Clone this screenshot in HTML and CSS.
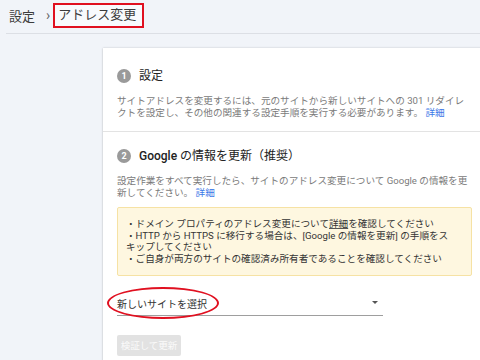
FILE: index.html
```html
<!DOCTYPE html>
<html lang="ja">
<head>
<meta charset="utf-8">
<link rel="stylesheet" href="styles.css">
</head>
<body>
<header class="header">
  <span class="crumb">設定</span>
  <span class="chev">›</span>
  <span class="crumb current">アドレス変更</span>
</header>
<main class="card">
  <section class="section first">
    <h2 class="heading"><span class="num">1</span>設定</h2>
    <p class="desc">サイトアドレスを変更するには、元のサイトから新しいサイトへの 301 リダイレクトを設定し、その他の関連する設定手順を実行する必要があります。 <a class="link">詳細</a></p>
  </section>
  <section class="section second">
    <h2 class="heading"><span class="num">2</span><span class="latin">Google</span>&nbsp;の情報を更新（推奨）</h2>
    <p class="desc">設定作業をすべて実行したら、サイトのアドレス変更について Google の情報を更新してください。 <a class="link">詳細</a></p>
    <div class="notice">
      <div>・ドメイン プロパティのアドレス変更について<u>詳細</u>を確認してください</div>
      <div>・HTTP から HTTPS に移行する場合は、[Google の情報を更新] の手順をスキップしてください</div>
      <div>・ご自身が両方のサイトの確認済み所有者であることを確認してください</div>
    </div>
    <div class="select">
      <span class="select-label">新しいサイトを選択</span>
      <span class="arrow"></span>
      <span class="ring"></span>
    </div>
    <button class="btn" disabled>検証して更新</button>
  </section>
</main>
</body>
</html>
```

FILE: styles.css
```css
html, body {
  margin: 0;
  padding: 0;
}
body {
  background: #f1f4f9;
  font-family: Roboto, "Noto Sans CJK JP", sans-serif;
  color: #333;
  overflow: hidden;
  width: 480px;
  height: 360px;
}
.header {
  margin-left: 6px;
  border-bottom: 1px solid #dcdfe5;
  display: flex;
  align-items: center;
  padding-left: 3px;
  font-size: 13px;
  color: #3c3c3c;
  box-sizing: border-box;
  height: 34px;
  padding-bottom: 3px;
}
.chev {
  margin: 0 6px 0 11px;
  color: #666;
  font-size: 14px;
}
.current {
  border: 2px solid #e01020;
  padding: 1px 6px 2px 3px;
  line-height: 18px;
  background: #f8fafd;
  margin-left: -3px;
}
.card {
  display: block;
  margin: 14px 0 0 103px;
  width: 400px;
  background: #fff;
  box-shadow: 0 0 2px rgba(0,0,0,0.18), 0 1px 2px rgba(0,0,0,0.1);
  min-height: 330px;
}
.section {
  padding: 0 14px;
  width: 355px;
}
.section.first {
  padding-top: 20px;
  padding-bottom: 12px;
  border-bottom: 1px solid #e3e3e3;
  width: auto;
}
.section.first .desc {
  width: 355px;
}
.section.second {
  padding-top: 16px;
}
.heading {
  margin: 0;
  display: flex;
  align-items: center;
  font-size: 12px;
  font-weight: 400;
  line-height: 16px;
  color: #222;
}
.latin {
  font-weight: 500;
}
.num {
  width: 14px;
  height: 14px;
  border-radius: 50%;
  background: #9a9a9a;
  color: #fff;
  font-size: 9px;
  font-weight: 700;
  display: inline-flex;
  align-items: center;
  justify-content: center;
  margin-right: 8px;
  font-family: Roboto, sans-serif;
}
.desc {
  margin: 11px 0 0;
  font-size: 9.6px;
  line-height: 12px;
  color: #7a7a7a;
}
.link {
  color: #3b78e7;
}
.notice {
  margin-top: 8px;
  background: #fef7e0;
  border: 1px solid #f6e2a4;
  border-radius: 2px;
  padding: 10px 16px 10px 8px;
  font-size: 9.6px;
  line-height: 11.7px;
  color: #333;
}
.notice u {
  text-decoration-color: #555;
}
.select {
  position: relative;
  margin-top: 16px;
  width: 266px;
  height: 23px;
  border-bottom: 1px solid #9e9e9e;
  display: flex;
  align-items: center;
  font-size: 10px;
  color: #333;
}
.select-label {
  flex: 1;
}
.arrow {
  width: 0;
  height: 0;
  border-left: 3px solid transparent;
  border-right: 3px solid transparent;
  border-top: 3px solid #555;
  margin-right: 5px;
  margin-top: -2px;
}
.ring {
  position: absolute;
  left: -10px;
  top: -5px;
  width: 108px;
  height: 28px;
  border: 2px solid #e01020;
  border-radius: 50%;
}
.btn {
  display: block;
  margin-top: 19px;
  height: 21px;
  width: 64px;
  padding: 0;
  border: none;
  border-radius: 2px;
  background: #e2e2e2;
  color: #fafafa;
  font-family: Roboto, "Noto Sans CJK JP", sans-serif;
  font-size: 9.5px;
}
```
